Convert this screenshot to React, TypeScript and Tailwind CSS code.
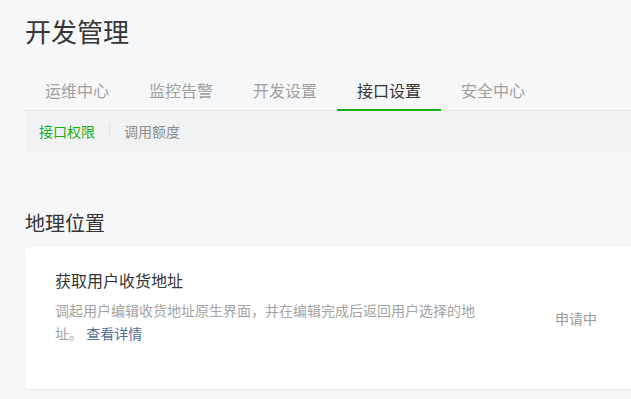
import React from 'react'

const tabs = ['运维中心', '监控告警', '开发设置', '接口设置', '安全中心']

function App() {
  return (
    <div
      className="w-full h-[399px] overflow-hidden bg-[#f6f7f9] pl-[25px]"
      style={{ fontFamily: '"Noto Sans CJK SC", "Noto Sans", sans-serif' }}
    >
      <div className="w-[720px]">
        <h1 className="pt-[13px] text-[26px] leading-[36px] text-[#353535] font-normal">开发管理</h1>

        <div className="mt-[21px] flex border-b border-[#e4e5e7]">
          {tabs.map((t, i) => (
            <div
              key={t}
              className={
                i === 3
                  ? 'h-[41px] -mb-px px-5 border-b-2 border-[#1aad19] text-[16px] leading-[40px] text-[#353535]'
                  : 'h-[41px] -mb-px px-5 border-b-2 border-transparent text-[16px] leading-[40px] text-[#a0a0a0]'
              }
            >
              {t}
            </div>
          ))}
        </div>

        <div className="h-[40px] bg-[#f1f2f4] flex items-center pl-[14px] text-[14px] leading-[20px]">
          <span className="text-[#1aad19]">接口权限</span>
          <span className="mx-[14px] h-[14px] w-px bg-[#e1e2e4]"></span>
          <span className="text-[#8d8d8d]">调用额度</span>
        </div>

        <h2 className="mt-[58px] text-[20px] leading-[28px] text-[#353535] font-normal">地理位置</h2>

        <div className="mt-[10px] h-[142px] bg-white rounded-[4px] shadow-[0_1px_2px_rgba(0,0,0,0.08)] flex px-[30px]">
          <div className="w-[425px] pt-[21px]">
            <div className="text-[16px] leading-[24px] text-[#353535]">获取用户收货地址</div>
            <p className="mt-[7px] text-[14px] leading-[23px] text-[#a3a3a3]">
              调起用户编辑收货地址原生界面，并在编辑完成后返回用户选择的地址。{' '}
              <a className="text-[#576b95]">查看详情</a>
            </p>
          </div>
          <div className="ml-[75px] self-center text-[14px] leading-[20px] text-[#9a9a9a]">申请中</div>
        </div>
      </div>
    </div>
  )
}

export default App
